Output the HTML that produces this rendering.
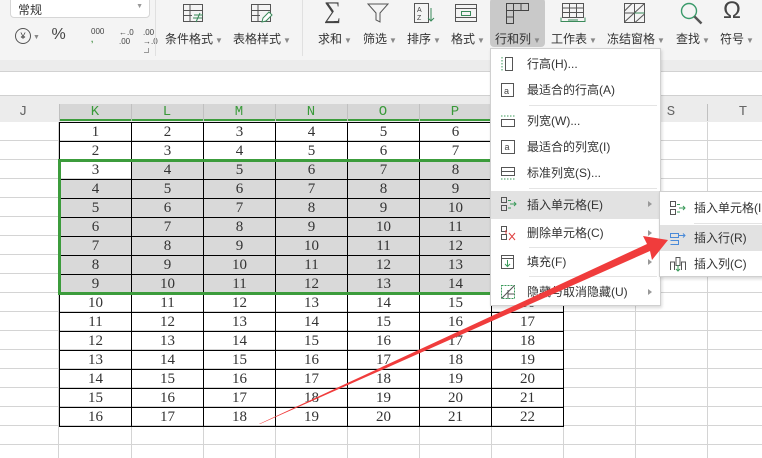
<!DOCTYPE html>
<html><head><meta charset="utf-8"><style>
*{margin:0;padding:0;box-sizing:border-box}
body{width:762px;height:458px;overflow:hidden;background:#fff;position:relative;font-family:"Liberation Sans","Noto Sans CJK SC",sans-serif;font-size:12px;color:#333}
.a{position:absolute}
.lbl{position:absolute;top:30px;font-size:12px;color:#333;white-space:nowrap}
.lbl i{font-style:normal;font-size:8px;color:#888;margin-left:2px}
table{border-collapse:collapse;table-layout:fixed}
td{width:72px;height:19px;border:1px solid #000;text-align:center;font-family:"Liberation Serif","Noto Serif CJK SC",serif;font-size:15px;line-height:17px;padding:0}
td.g{background:#d9d9d9}
.hd{position:absolute;top:104px;height:17px;width:72px;text-align:center;font-family:"Liberation Mono",monospace;font-size:14px;line-height:17px}
.mi{position:absolute;left:0;width:171px;height:26px;font-size:12px;line-height:26px;padding-left:36px;color:#333}
.mi svg{position:absolute;left:9px;top:5px}
.ar{position:absolute;right:10px;top:10px;width:0;height:0;border-left:4px solid #999;border-top:3px solid transparent;border-bottom:3px solid transparent}
.vl{position:absolute;top:122px;width:1px;height:336px;background:#d4d4d4}
</style></head><body>
<div class="a" style="left:0;top:0;width:762px;height:60px;background:#f4f4f4"></div>
<div class="a" style="left:0;top:60px;width:762px;height:12px;background:#ececec;border-bottom:1px solid #d2d2d2"></div>
<div class="a" style="left:0;top:95px;width:762px;height:27px;background:#ececec;border-top:1px solid #d0d0d0"></div>
<div class="a" style="left:10px;top:-4px;width:140px;height:22px;background:#fff;border:1px solid #d6d6d6;border-radius:4px;padding:4px 7px;font-size:12px">常规<span style="position:absolute;right:6px;top:6px;font-size:7px;color:#999">▼</span></div>
<div class="a" style="left:15px;top:26px;font-size:13px;color:#444;white-space:nowrap;letter-spacing:0">
<span style="display:inline-block;width:16px;height:16px;border:1.3px solid #555;border-radius:50%;font-size:9px;text-align:center;line-height:14px">¥</span><span style="font-size:7px;color:#888"> ▼</span>
<span style="margin-left:8px;font-size:16px">%</span>
<span style="position:absolute;left:76px;top:2px;font-size:8px;line-height:8px">000<br><b style="color:#3a8a3a">,</b></span>
<span style="position:absolute;left:104px;top:2px;font-size:8px;line-height:9px">←.0<br>.00</span>
<span style="position:absolute;left:128px;top:2px;font-size:8px;line-height:9px">.00<br>→.0</span>
</div>
<div class="a" style="left:144px;top:48px;width:5px;height:5px;border-right:1px solid #999;border-bottom:1px solid #999"></div>
<div class="a" style="left:155px;top:0;width:1px;height:56px;background:#e0e0e0"></div>
<div class="a" style="left:302px;top:0;width:1px;height:56px;background:#e0e0e0"></div>
<svg class="a" style="left:182px;top:3px" width="24" height="22"><rect x="1.5" y="1.5" width="19" height="17" fill="none" stroke="#555"/><path d="M1.5 7.5H20M1.5 12.5H10M8 1.5V18" stroke="#555"/><path d="M12 12h9M11 15h9M14 19l4-9" stroke="#3a8a5a" fill="none"/></svg>
<svg class="a" style="left:250px;top:3px" width="24" height="22"><rect x="1.5" y="1.5" width="19" height="17" fill="none" stroke="#555"/><path d="M1.5 7.5H20M1.5 12.5H10M8 1.5V18" stroke="#555"/><path d="M12 19l1-4 6-6 3 3-6 6z" stroke="#3a8a5a" fill="#fff"/></svg>
<div class="a" style="left:324px;top:-2px;font-size:24px;color:#444;font-family:'Liberation Serif',serif">∑</div>
<svg class="a" style="left:366px;top:2px" width="24" height="22"><path d="M2 2h20l-8 9v9l-4-2v-7z" fill="none" stroke="#555"/></svg>
<svg class="a" style="left:413px;top:2px" width="22" height="22"><rect x="1.5" y="1.5" width="14" height="19" fill="none" stroke="#555"/><text x="4" y="10" font-size="7" fill="#444">A</text><text x="4" y="18" font-size="7" fill="#444">Z</text><path d="M18 6v13M15 16l3 3 3-3" stroke="#3a8a5a" fill="none"/></svg>
<svg class="a" style="left:454px;top:3px" width="24" height="20"><rect x="1.5" y="1.5" width="21" height="17" fill="none" stroke="#555"/><path d="M1.5 5.5h21M1.5 14.5h21" stroke="#555"/><rect x="7.5" y="8.5" width="9" height="4" fill="none" stroke="#3a8a5a"/></svg>
<div class="a" style="left:490px;top:-2px;width:55px;height:49px;background:#c9c9c9;border-radius:4px"></div>
<svg class="a" style="left:505px;top:2px" width="26" height="22"><path d="M1.5 1.5h22v7h-15v13h-7z" fill="none" stroke="#444"/><path d="M8.5 1.5v7M16 1.5v7M1.5 8.5h7M1.5 15h7" stroke="#444"/></svg>
<svg class="a" style="left:560px;top:2px" width="26" height="22"><rect x="2.5" y="1.5" width="21" height="14" fill="none" stroke="#555"/><path d="M2.5 6h21M2.5 10.5h21M9.5 1.5v14M16.5 1.5v14" stroke="#555"/><path d="M1 15.5v4h24v-4M8 18h10" stroke="#3a8a5a" fill="none"/></svg>
<svg class="a" style="left:623px;top:2px" width="24" height="22"><rect x="1.5" y="1.5" width="20" height="19" fill="none" stroke="#555"/><path d="M1.5 11h20M11.5 1.5v19M1.5 20L21.5 1.5M1.5 9L9 1.5M12 20.5L21.5 12" stroke="#555" fill="none"/><path d="M11.5 11h10" stroke="#3a8a5a"/></svg>
<svg class="a" style="left:679px;top:1px" width="26" height="24"><circle cx="10" cy="10" r="7.5" fill="none" stroke="#3a9a6a" stroke-width="1.4"/><path d="M15.5 15.5l7 7" stroke="#555" stroke-width="2.5"/></svg>
<div class="a" style="left:723px;top:-3px;font-size:24px;color:#444;font-family:'Liberation Sans',sans-serif">Ω</div>
<div class="lbl" style="left:165px">条件格式<i>▼</i></div>
<div class="lbl" style="left:233px">表格样式<i>▼</i></div>
<div class="lbl" style="left:318px">求和<i>▼</i></div>
<div class="lbl" style="left:363px">筛选<i>▼</i></div>
<div class="lbl" style="left:407px">排序<i>▼</i></div>
<div class="lbl" style="left:451px">格式<i>▼</i></div>
<div class="lbl" style="left:495px">行和列<i>▼</i></div>
<div class="lbl" style="left:551px">工作表<i>▼</i></div>
<div class="lbl" style="left:607px">冻结窗格<i>▼</i></div>
<div class="lbl" style="left:676px">查找<i>▼</i></div>
<div class="lbl" style="left:720px">符号<i>▼</i></div>
<div class="a" style="left:0;top:122px;width:762px;height:336px;background-image:repeating-linear-gradient(to bottom,transparent 0 18px,#d4d4d4 18px 19px)"></div>
<div class="vl" style="left:58px"></div>
<div class="vl" style="left:635px"></div>
<div class="vl" style="left:707px"></div>
<div class="vl" style="left:131px;top:426px;height:32px;box-shadow:72px 0 #d4d4d4,144px 0 #d4d4d4,216px 0 #d4d4d4,288px 0 #d4d4d4,360px 0 #d4d4d4,432px 0 #d4d4d4"></div>
<div class="hd" style="left:-13px;color:#666">J</div>
<div class="a" style="left:59px;top:104px;width:432px;height:17px;background:#d6d6d6;border-bottom:2px solid #3c9c3c"></div>
<div class="hd" style="left:59px;color:#3a9a3a">K</div>
<div class="hd" style="left:131px;color:#3a9a3a">L</div>
<div class="hd" style="left:203px;color:#3a9a3a">M</div>
<div class="hd" style="left:275px;color:#3a9a3a">N</div>
<div class="hd" style="left:347px;color:#3a9a3a">O</div>
<div class="hd" style="left:419px;color:#3a9a3a">P</div>
<div class="hd" style="left:635px;color:#666">S</div>
<div class="hd" style="left:707px;color:#666">T</div>
<div class="a" style="left:131px;top:104px;width:1px;height:17px;background:#c0c0c0;box-shadow:72px 0 #c0c0c0,144px 0 #c0c0c0,216px 0 #c0c0c0,288px 0 #c0c0c0,360px 0 #c0c0c0"></div>
<div class="a" style="left:59px;top:104px;width:1px;height:17px;background:#c0c0c0;box-shadow:576px 0 #c0c0c0,648px 0 #c0c0c0"></div>
<table class="a" style="left:59px;top:122px">
<tr><td>1</td><td>2</td><td>3</td><td>4</td><td>5</td><td>6</td><td>7</td></tr>
<tr><td>2</td><td>3</td><td>4</td><td>5</td><td>6</td><td>7</td><td>8</td></tr>
<tr><td>3</td><td class="g">4</td><td class="g">5</td><td class="g">6</td><td class="g">7</td><td class="g">8</td><td class="g">9</td></tr>
<tr><td class="g">4</td><td class="g">5</td><td class="g">6</td><td class="g">7</td><td class="g">8</td><td class="g">9</td><td class="g">10</td></tr>
<tr><td class="g">5</td><td class="g">6</td><td class="g">7</td><td class="g">8</td><td class="g">9</td><td class="g">10</td><td class="g">11</td></tr>
<tr><td class="g">6</td><td class="g">7</td><td class="g">8</td><td class="g">9</td><td class="g">10</td><td class="g">11</td><td class="g">12</td></tr>
<tr><td class="g">7</td><td class="g">8</td><td class="g">9</td><td class="g">10</td><td class="g">11</td><td class="g">12</td><td class="g">13</td></tr>
<tr><td class="g">8</td><td class="g">9</td><td class="g">10</td><td class="g">11</td><td class="g">12</td><td class="g">13</td><td class="g">14</td></tr>
<tr><td class="g">9</td><td class="g">10</td><td class="g">11</td><td class="g">12</td><td class="g">13</td><td class="g">14</td><td class="g">15</td></tr>
<tr><td>10</td><td>11</td><td>12</td><td>13</td><td>14</td><td>15</td><td>16</td></tr>
<tr><td>11</td><td>12</td><td>13</td><td>14</td><td>15</td><td>16</td><td>17</td></tr>
<tr><td>12</td><td>13</td><td>14</td><td>15</td><td>16</td><td>17</td><td>18</td></tr>
<tr><td>13</td><td>14</td><td>15</td><td>16</td><td>17</td><td>18</td><td>19</td></tr>
<tr><td>14</td><td>15</td><td>16</td><td>17</td><td>18</td><td>19</td><td>20</td></tr>
<tr><td>15</td><td>16</td><td>17</td><td>18</td><td>19</td><td>20</td><td>21</td></tr>
<tr><td>16</td><td>17</td><td>18</td><td>19</td><td>20</td><td>21</td><td>22</td></tr>
</table>
<div class="a" style="left:58px;top:159px;width:520px;height:136px;border:3px solid #3c9c3c"></div>
<div class="a" style="left:490px;top:48px;width:171px;height:258px;background:#fff;border:1px solid #d0d0d0;box-shadow:1px 2px 3px rgba(0,0,0,.15)">
<div class="mi" style="top:2px"><svg width="16" height="16"><path d="M2 1v14" stroke="#3a9a5a" stroke-dasharray="1.5 1.5"/><rect x="5.5" y="1.5" width="7" height="13" fill="none" stroke="#555"/></svg>行高(H)...</div>
<div class="mi" style="top:28px"><svg width="16" height="16"><rect x="1.5" y="1.5" width="12" height="13" fill="none" stroke="#555"/><text x="4" y="12" font-size="9" fill="#444">a</text></svg>最适合的行高(A)</div>
<div class="a" style="left:38px;top:56px;width:128px;height:1px;background:#e4e4e4"></div>
<div class="mi" style="top:59px"><svg width="16" height="16"><path d="M1 3h14" stroke="#3a9a5a" stroke-dasharray="1.5 1.5"/><rect x="1.5" y="6.5" width="13" height="7" fill="none" stroke="#555"/></svg>列宽(W)...</div>
<div class="mi" style="top:85px"><svg width="16" height="16"><rect x="1.5" y="1.5" width="13" height="13" fill="none" stroke="#555"/><text x="4.5" y="11" font-size="9" fill="#444">a</text></svg>最适合的列宽(I)</div>
<div class="mi" style="top:111px"><svg width="16" height="16"><rect x="1.5" y="2.5" width="13" height="8" fill="none" stroke="#555"/><path d="M1.5 6.5h13" stroke="#555"/><path d="M1 14h14" stroke="#3a9a5a" stroke-dasharray="1.5 1.5"/></svg>标准列宽(S)...</div>
<div class="a" style="left:38px;top:139px;width:128px;height:1px;background:#e4e4e4"></div>
<div class="mi" style="top:142px;background:#e2e2e2;height:28px;line-height:28px"><svg width="18" height="16"><rect x="1.5" y="1.5" width="5" height="5" fill="none" stroke="#555"/><rect x="1.5" y="9.5" width="5" height="5" fill="none" stroke="#555"/><path d="M8 4.5h3M8 12h3M10 8h6M14 6l2 2-2 2" stroke="#3a9a5a" fill="none"/></svg>插入单元格(E)<span class="ar"></span></div>
<div class="mi" style="top:171px"><svg width="18" height="18"><rect x="1.5" y="1.5" width="5" height="5" fill="none" stroke="#555"/><rect x="1.5" y="9.5" width="5" height="5" fill="none" stroke="#555"/><path d="M6 5v4M9 8l6 7M15 8l-6 7" stroke="#e04040"/></svg>删除单元格(C)<span class="ar"></span></div>
<div class="a" style="left:38px;top:198px;width:128px;height:1px;background:#e4e4e4"></div>
<div class="mi" style="top:200px"><svg width="16" height="16"><rect x="1.5" y="1.5" width="12" height="13" fill="none" stroke="#555"/><path d="M1.5 4.5h12" stroke="#555"/><path d="M7.5 6v6M5 10l2.5 2.5L10 10" stroke="#3a9a5a" fill="none"/></svg>填充(F)<span class="ar"></span></div>
<div class="a" style="left:38px;top:227px;width:128px;height:1px;background:#e4e4e4"></div>
<div class="mi" style="top:230px"><svg width="16" height="16"><rect x="1.5" y="1.5" width="13" height="13" fill="none" stroke="#3a9a5a" stroke-dasharray="2 1"/><path d="M1.5 14.5L14.5 1.5M8 6v8.5M8 10h6.5" stroke="#555"/></svg>隐藏与取消隐藏(U)<span class="ar"></span></div>
</div>
<div class="a" style="left:659px;top:191px;width:110px;height:86px;background:#fff;border:1px solid #d0d0d0;box-shadow:1px 2px 3px rgba(0,0,0,.15)">
<div class="mi" style="top:3px;width:110px;padding-left:34px"><svg width="18" height="16"><rect x="1.5" y="1.5" width="5" height="5" fill="none" stroke="#555"/><rect x="1.5" y="9.5" width="5" height="5" fill="none" stroke="#555"/><path d="M8 4.5h3M8 12h3M10 8h6M14 6l2 2-2 2" stroke="#3a9a5a" fill="none"/></svg>插入单元格(I</div>
<div class="a" style="left:34px;top:31px;width:76px;height:1px;background:#e4e4e4"></div>
<div class="mi" style="top:33px;width:110px;padding-left:34px;background:#e2e2e2"><svg width="18" height="16"><rect x="1.5" y="3.5" width="8" height="4" fill="none" stroke="#4a8ad8"/><path d="M1.5 10.5h8v4h-8M10 5.5h6M14 3.5l2 2-2 2" stroke="#4a8ad8" fill="none"/></svg>插入行(R)</div>
<div class="mi" style="top:59px;width:110px;padding-left:34px"><svg width="18" height="16"><path d="M1.5 14V6h4v8M12.5 14V6h4v8" stroke="#555" fill="none"/><rect x="7" y="1.5" width="4" height="8" fill="none" stroke="#555"/><path d="M9 9v6M7 13l2 2 2-2" stroke="#3a9a5a" fill="none"/></svg>插入列(C)</div>
</div>
<svg class="a" style="left:0;top:0" width="762" height="458"><polygon points="259,424 647,244 643,236 668,240 652,260 650,251 260,424" fill="#f03c3c"/></svg>
</body></html>
